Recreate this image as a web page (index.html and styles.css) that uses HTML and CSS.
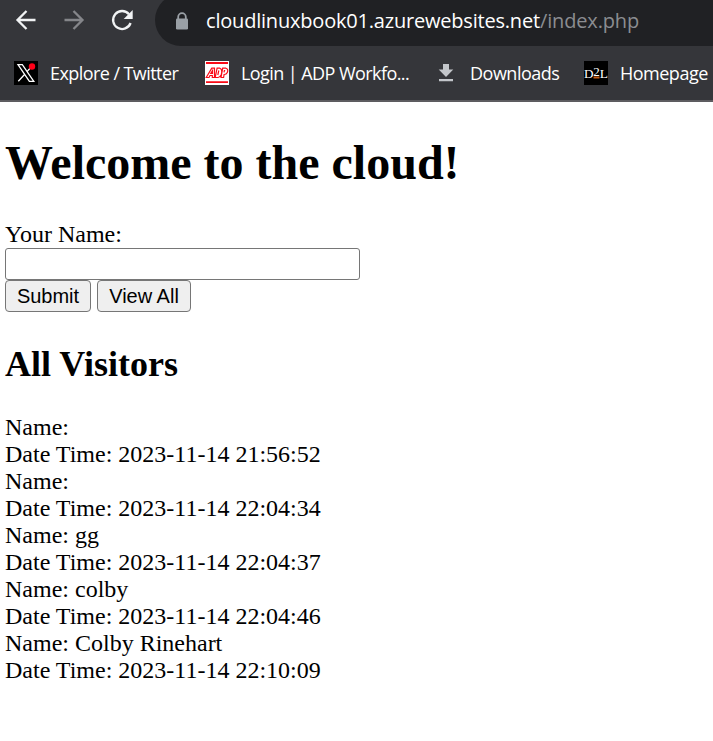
FILE: index.html
```html
<!DOCTYPE html>
<html lang="en">
<head>
<meta charset="utf-8">
<title>Welcome to the cloud!</title>
<link rel="stylesheet" href="styles.css">
</head>
<body>
<header class="browser">
  <div class="toolbar">
    <svg class="nav" width="24" height="24" viewBox="0 0 24 24"><path d="M21.5 12H4M12.5 3L3.5 12l9 9" /></svg>
    <svg class="nav dim" width="24" height="24" viewBox="0 0 24 24"><path d="M2.5 12H20M11.5 3l9 9-9 9" /></svg>
    <svg class="nav" width="24" height="24" viewBox="0 0 24 24"><path d="M19 6.2A9 9 0 1 0 20.6 15" /><path class="fill" d="M22.700 2v9h-9z" /></svg>
    <div class="address">
      <svg width="14" height="18" viewBox="0 0 14 18"><path class="shackle" d="M3.200 8V5a3.800 3.800 0 0 1 7.600 0v3" /><rect x="1" y="6.500" width="12" height="11" rx="1.300" /></svg>
      <span class="host">cloudlinuxbook01.azurewebsites.net</span><span class="path">/index.php</span>
    </div>
  </div>
  <nav class="bookmarks">
    <a class="bookmark explore"><svg width="24" height="24" viewBox="0 0 24 24"><rect width="24" height="24" /><path d="M4 3.700h4.300L19.800 20.300h-4.400zM18.500 4.500L12.800 10.900M10.500 13.500L4.300 20.300" fill="none" stroke="#fff" stroke-width="1.300" /><circle cx="18" cy="5.500" r="3.200" fill="#ff0018" /></svg><span>Explore / Twitter</span></a>
    <a class="bookmark login"><svg width="24" height="24" viewBox="0 0 24 24"><rect width="24" height="24" fill="#fff" /><path d="M1 2h22M1 21.200h22" stroke="#fa0a16" stroke-width="1.800" /><path d="M1.200 16.500L6.800 7.200h2.700v9.300H7.300v-2H5l-1 2zM5.800 12.500h1.700v-2.800zM10.200 16.500l1.900-9.300h2.800q3 1.500 1.200 6.800-1.200 2.500-3 2.500zM12.800 14l1-4.500M16 16.500l1.700-9.300h3.200q2.800 1 1.400 4.300-.8 2-3.200 2l-.5 3zM19 11.300l.4-1.800h.8" fill="none" stroke="#fa0a16" stroke-width="1.200" /></svg><span>Login | ADP Workfo...</span></a>
    <a class="bookmark downloads"><svg width="24" height="24" viewBox="0 0 24 24"><path d="M9 3h6v5.500h4.300L12 16 4.700 8.500H9zM5 18h14v2.300H5z" fill="#c3c6ca" /></svg><span>Downloads</span></a>
    <a class="bookmark home"><svg width="24" height="24" viewBox="0 0 24 24"><rect width="24" height="24" /><path d="M9.500 15.500h6v2h-6z" fill="#c45a12" /><text class="mark" y="17"><tspan x="0" textLength="9.500" lengthAdjust="spacingAndGlyphs">D</tspan><tspan x="9.200" y="15">2</tspan><tspan x="15.800" y="17" textLength="8.200" lengthAdjust="spacingAndGlyphs">L</tspan></text></svg><span>Homepage</span></a>
  </nav>
</header>
<main>
  <h1>Welcome to the cloud!</h1>
  <form>
    <label for="name">Your Name:</label>
    <input id="name" type="text">
    <div class="actions"><button type="button" class="submit">Submit</button><button type="button" class="view">View All</button></div>
  </form>
  <h2>All Visitors</h2>
  <div class="visitors">
    Name:<br>Date Time: 2023-11-14 21:56:52<br>
    Name:<br>Date Time: 2023-11-14 22:04:34<br>
    Name: gg<br>Date Time: 2023-11-14 22:04:37<br>
    Name: colby<br>Date Time: 2023-11-14 22:04:46<br>
    Name: Colby Rinehart<br>Date Time: 2023-11-14 22:10:09
  </div>
</main>
</body>
</html>
```
FILE: styles.css
```css
* { box-sizing: border-box; }
body { margin: 0; width: 713px; height: 741px; overflow: hidden; background: #fff; color: #000; font: 24px/27px "Liberation Serif", "Times New Roman", serif; }
.browser { height: 102px; background: #35363a; border-bottom: 2px solid #5d5c60; font-family: "Open Sans", sans-serif; color: #fff; overflow: hidden; }
.toolbar { display: flex; height: 46px; padding-left: 14px; gap: 24px; }
.nav { flex: none; margin-top: 8px; fill: none; stroke: #f1f3f4; stroke-width: 2.3; }
.dim { stroke: #85868a; }
.nav .fill { fill: #f1f3f4; stroke: none; }
.address { display: flex; flex: none; width: 600px; height: 52px; margin: -6px 0 0 -3px; padding-left: 20px; border-radius: 26px; background: #202124; font-size: 20px; line-height: 54px; white-space: nowrap; }
.address svg { flex: none; margin: 18px 17px 0 0; fill: #9aa0a6; }
.shackle { fill: none; stroke: #9aa0a6; stroke-width: 1.8; }
.host { width: 334px; letter-spacing: -0.2px; }
.path { color: #8b8d91; letter-spacing: -0.15px; }
.bookmarks { display: flex; height: 54px; padding-left: 14px; font-size: 18px; line-height: 54px; white-space: nowrap; }
.bookmark { display: flex; flex: none; align-items: center; gap: 12px; letter-spacing: -0.5px; }
.bookmark span { margin-top: -1px; }
.explore { width: 191px; }
.explore, .login { letter-spacing: -0.57px; }
.login { width: 229px; }
.downloads { width: 150px; }
.mark { fill: #fff; font: 13px "Liberation Serif", serif; letter-spacing: 0; }
main { padding-left: 5px; }
h1 { margin: 33px 0 30px; font-size: 48px; line-height: 56px; }
form { display: flex; flex-direction: column; align-items: flex-start; }
input { width: 355px; height: 32px; border: 1px solid #767676; border-radius: 3px; background: #fff; }
.actions { display: flex; gap: 6px; }
button { height: 32px; padding: 0; border: 1px solid #767676; border-radius: 4px; background: #efefef; color: #000; font: 20px "Liberation Sans", Arial, sans-serif; }
.submit { width: 86px; }
.view { width: 94px; }
h2 { margin: 32px 0 29px; font-size: 36px; line-height: 41px; }
```
